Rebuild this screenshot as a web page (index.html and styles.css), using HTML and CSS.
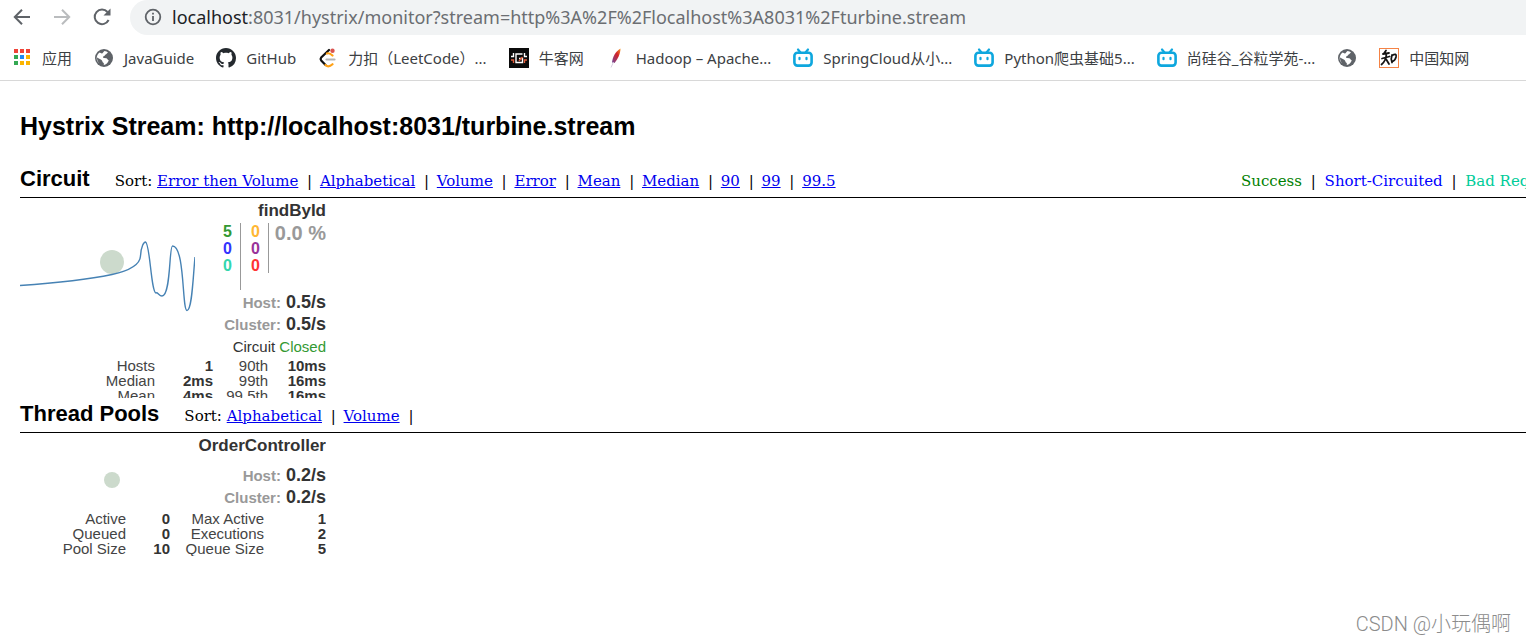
FILE: index.html
```html
<!DOCTYPE html>
<html lang="zh-CN">

<head>
    <meta charset="utf-8">
    <meta name="viewport" content="width=device-width, initial-scale=1.0">
    <title>Hystrix Monitor</title>

    <link rel="stylesheet" href="styles.css">

</head>

<body>

    <!-- shared icons -->
    <svg class="sprite" aria-hidden="true">
        <symbol id="globe" viewBox="0 0 20 20">
            <circle cx="10" cy="10" r="9" fill="#5f6368" />
            <path fill="#fff" d="M10.500 3 C12 3.200 13.200 3.800 14 4.600 C13 5 12.800 6 11.800 6.500 C10.800 6.800 10.800 8 9.600 8.300 C8.600 8.600 8.800 10 10 10 L12.400 10.200 C13.600 10.600 13.400 12 14.800 12.200 C14 14.800 12 16.600 9.800 17 L9.800 15 C8.200 14.600 8.600 12.600 7.200 11.800 L3 9.600 C3 12 3.800 14 5.200 15.300 C1.400 12 2.200 7 5.600 4.400 L7.800 5.400 C9 5.400 9.200 4 10.500 3 Z" />
        </symbol>
        <symbol id="bili" viewBox="0 0 20 20">
            <path d="M5 1.500 L7.500 4.500 M15 1.500 L12.500 4.500" stroke="#0ea7de" stroke-width="2.200" stroke-linecap="round" />
            <rect x="1.400" y="4.800" width="17.200" height="12.800" rx="3" fill="#fff" stroke="#0ea7de" stroke-width="2.600" />
            <path d="M6.500 9.800 V11.200 M13.500 9.800 V11.200" stroke="#0ea7de" stroke-width="2.200" stroke-linecap="round" />
        </symbol>
    </svg>

    <header class="browser">
        <nav class="toolbar">
            <button class="tool" aria-label="Back">
                <svg viewBox="0 0 20 20"><path d="M18 10 H3 M10 2.800 L2.800 10 L10 17.200" fill="none" stroke="#5f6368" stroke-width="2" /></svg>
            </button>
            <button class="tool" aria-label="Forward" disabled>
                <svg viewBox="0 0 20 20"><path d="M2 10 H17 M10 2.800 L17.200 10 L10 17.200" fill="none" stroke="#babcbe" stroke-width="2" /></svg>
            </button>
            <button class="tool" aria-label="Reload">
                <svg viewBox="0 0 20 20"><path d="M16.600 13 A7.300 7.300 0 1 1 15.500 5" fill="none" stroke="#5f6368" stroke-width="2" /><path d="M18.500 1.500 V8.500 H11.500 Z" fill="#5f6368" /></svg>
            </button>
            <div class="address">
                <svg class="info" viewBox="0 0 18 18"><circle cx="9" cy="9" r="7.300" fill="none" stroke="#5f6368" stroke-width="1.800" /><path d="M9 8 V13 M9 4.800 V6.600" stroke="#5f6368" stroke-width="1.800" /></svg>
                <label for="url">localhost</label>
                <input id="url" type="text" value=":8031/hystrix/monitor?stream=http%3A%2F%2Flocalhost%3A8031%2Fturbine.stream">
            </div>
        </nav>
        <nav class="bookmarks">
            <a href="#">
                <svg viewBox="0 0 20 20">
                    <path fill="#f04438" d="M2 1h4v4H2zM8 1h4v4H8zM14 1h4v4h-4z" />
                    <path fill="#34a853" d="M2 7h4v4H2zM2 13h4v4H2z" />
                    <path fill="#1e88f5" d="M8 7h4v4H8z" />
                    <path fill="#fbb400" d="M14 7h4v4h-4zM8 13h4v4H8zM14 13h4v4h-4z" />
                </svg>应用</a>
            <a href="#"><svg><use href="#globe" /></svg>JavaGuide</a>
            <a href="#">
                <svg viewBox="0 0 16 16"><path fill="#24292e" d="M8 0C3.580 0 0 3.580 0 8c0 3.540 2.290 6.530 5.470 7.590.4.070.55-.17.55-.38 0-.19-.01-.82-.01-1.490-2.010.37-2.530-.49-2.690-.94-.09-.23-.48-.94-.82-1.130-.28-.15-.68-.52-.01-.53.63-.01 1.080.58 1.230.82.72 1.210 1.870.87 2.330.66.07-.52.28-.87.51-1.070-1.780-.2-3.640-.89-3.640-3.950 0-.87.31-1.590.82-2.150-.08-.2-.36-1.020.08-2.120 0 0 .67-.21 2.200.82.64-.18 1.320-.27 2-.27s1.360.09 2 .27c1.530-1.040 2.200-.82 2.200-.82.44 1.100.16 1.920.08 2.120.51.56.82 1.270.82 2.150 0 3.070-1.870 3.750-3.650 3.950.29.25.54.73.54 1.480 0 1.070-.01 1.930-.01 2.200 0 .21.15.46.55.38A8.010 8.010 0 0 0 16 8c0-4.420-3.580-8-8-8z" /></svg>GitHub</a>
            <a href="#">
                <svg viewBox="0 0 20 20" fill="none" stroke-linecap="round" stroke-width="2.200">
                    <path d="M11 2 L3.200 9.500 Q2 11 3.200 12.500 L7.500 17" stroke="#111" />
                    <path d="M7.500 17 Q10.500 20 14.500 16.200 M9 5.500 Q11.500 4.500 14.500 7.500" stroke="#ffa116" />
                    <path d="M8.500 11.500 H16.500" stroke="#b3b3b3" />
                    <circle cx="14.500" cy="2.800" r="2.200" fill="#d9534f" />
                </svg>力扣（LeetCode）...</a>
            <a href="#">
                <svg viewBox="0 0 20 20" fill="none" stroke-width="1.400">
                    <rect width="20" height="20" fill="#0b0b0b" />
                    <path d="M13.500 6 H7 V14.500 H13.500 V10.500 H10 M4.500 5 V8.500 H2 M15.500 5 V8.500 H18" stroke="#fff" />
                    <path d="M2 12 H4.500 V15 M18 12 H15.500 V15 M10 13 L13.500 9" stroke="#e25c3b" />
                </svg>牛客网</a>
            <a href="#">
                <svg viewBox="0 0 20 20">
                    <defs><linearGradient id="feather" x1="1" y1="0" x2="0" y2="1"><stop offset="0" stop-color="#f69923" /><stop offset=".4" stop-color="#d22128" /><stop offset="1" stop-color="#6d4a9c" /></linearGradient></defs>
                    <path d="M14.500 0.500 C9.500 3.500 6.500 9 6 14.500 L8.500 15 C11.500 11.500 14.500 6 14.500 0.500 Z" fill="url(#feather)" />
                    <path d="M7.500 14 L5 19.500" stroke="#d8cfe0" />
                </svg>Hadoop – Apache...</a>
            <a href="#"><svg><use href="#bili" /></svg>SpringCloud从小...</a>
            <a href="#"><svg><use href="#bili" /></svg>Python爬虫基础5...</a>
            <a href="#"><svg><use href="#bili" /></svg>尚硅谷_谷粒学苑-...</a>
            <a href="#" aria-label="Bookmark"><svg><use href="#globe" /></svg></a>
            <a href="#">
                <svg viewBox="0 0 20 20" fill="none">
                    <rect x=".5" y=".5" width="19" height="19" fill="#fff" stroke="#f58345" />
                    <path d="M7 2.500 L4.500 6 M4 6 L10 5 M3 10.500 L10.500 8.500 M7.500 5.500 Q7 13 2.500 16.500 M7 11 L10 16 M13 7 Q11.500 11 13 14.500 M13 7.500 Q18 4.500 17 9 Q16 13 13 13.500" stroke="#151515" stroke-width="1.800" stroke-linecap="round" />
                </svg>中国知网</a>
        </nav>
    </header>

    <main>
        <h1>Hystrix Stream: http://localhost:8031/turbine.stream</h1>

        <section>
            <div class="menubar">
                <h2>Circuit</h2>
                <p class="sort">Sort:
                    <a href="#">Error then Volume</a> |
                    <a href="#">Alphabetical</a> |
                    <a href="#">Volume</a> |
                    <a href="#">Error</a> |
                    <a href="#">Mean</a> |
                    <a href="#">Median</a> |
                    <a href="#">90</a> |
                    <a href="#">99</a> |
                    <a href="#">99.5</a></p>
                <p class="legend"><span class="success">Success</span> | <span class="short">Short-Circuited</span> | <span class="bad">Bad Request</span></p>
            </div>
            <article class="monitor circuit">
                <div class="top">
                    <svg class="graph" viewBox="0 0 175 120">
                        <circle cx="92" cy="64" r="12" fill="#ccdacc" />
                        <path d="M0 87.500 C35 85 70 81 92 76.500 C108 73 120 67 120.500 58 C121 48 124 44 125.500 44 C130 45 131 94 136 95 C137.500 93.500 139 98 142 98 C151 98 149 48 152.500 48 C165 48 162 112.500 167 112.500 C172 112.500 173 80 175 59" fill="none" stroke="steelblue" stroke-width="1.400" />
                    </svg>
                    <div class="info-col">
                        <h3>findById</h3>
                        <div class="counters">
                            <ul class="first">
                                <li class="success">5</li>
                                <li class="short">0</li>
                                <li class="bad">0</li>
                            </ul>
                            <ul class="second">
                                <li class="timeout">0</li>
                                <li class="rejected">0</li>
                                <li class="failure">0</li>
                            </ul>
                            <p class="percent">0.0 %</p>
                        </div>
                        <p class="rate"><span>Host:</span> 0.5/s</p>
                        <p class="rate"><span>Cluster:</span> 0.5/s</p>
                        <p class="status">Circuit <span class="success">Closed</span></p>
                    </div>
                </div>
                <table>
                    <tr>
                        <th>Hosts</th>
                        <td>1</td>
                        <th>90th</th>
                        <td>10ms</td>
                    </tr>
                    <tr>
                        <th>Median</th>
                        <td>2ms</td>
                        <th>99th</th>
                        <td>16ms</td>
                    </tr>
                    <tr>
                        <th>Mean</th>
                        <td>4ms</td>
                        <th>99.5th</th>
                        <td>16ms</td>
                    </tr>
                </table>
            </article>
        </section>

        <section>
            <div class="menubar">
                <h2>Thread Pools</h2>
                <p class="sort">Sort:
                    <a href="#">Alphabetical</a> |
                    <a href="#">Volume</a> |</p>
            </div>
            <article class="monitor pool">
                <div class="top">
                    <svg class="graph" viewBox="0 0 175 70">
                        <circle cx="92" cy="47" r="8" fill="#ccdacc" />
                    </svg>
                    <div class="info-col">
                        <h3>OrderController</h3>
                        <p class="rate"><span>Host:</span> 0.2/s</p>
                        <p class="rate"><span>Cluster:</span> 0.2/s</p>
                    </div>
                </div>
                <table>
                    <tr>
                        <th>Active</th>
                        <td>0</td>
                        <th>Max Active</th>
                        <td>1</td>
                    </tr>
                    <tr>
                        <th>Queued</th>
                        <td>0</td>
                        <th>Executions</th>
                        <td>2</td>
                    </tr>
                    <tr>
                        <th>Pool Size</th>
                        <td>10</td>
                        <th>Queue Size</th>
                        <td>5</td>
                    </tr>
                </table>
            </article>
        </section>
    </main>

    <p class="watermark">CSDN @小玩偶啊</p>

</body>

</html>
```
FILE: styles.css
```css
body {
    margin: 0;
    min-height: 100vh;
    position: relative;
    overflow-x: hidden;
    background-color: white;
    font-family: "Liberation Sans", sans-serif;
}

h1,
h2,
h3,
p,
ul {
    margin: 0;
    padding: 0;
}

.sprite {
    display: none;
}

/* browser bars */
.browser {
    font-family: "Noto Sans", "Noto Sans CJK SC", sans-serif;
    border-bottom: 1px solid #d8d8d8;
}

.toolbar {
    display: flex;
    height: 35px;
    padding-left: 12px;
    gap: 20px;
}

.tool {
    width: 20px;
    height: 34px;
    padding: 0;
    border: none;
    background: none;
}

.tool svg {
    display: block;
    width: 20px;
    height: 20px;
}

.address {
    flex: 1;
    display: flex;
    align-items: center;
    margin-left: -2px;
    padding: 0 0 2px 14px;
    background-color: #f1f3f4;
    border-radius: 18px 0 0 18px;
    font-size: 18px;
    color: #202124;
}

.info {
    width: 18px;
    height: 18px;
    margin-right: 10px;
}

.address input {
    flex: 1;
    padding: 0;
    border: none;
    outline: none;
    background: none;
    font: inherit;
    color: #6b6e72;
}

.bookmarks {
    display: flex;
    align-items: center;
    gap: 22px;
    height: 45px;
    padding-left: 12px;
}

.bookmarks a {
    display: flex;
    align-items: center;
    gap: 10px;
    font-size: 15px;
    white-space: nowrap;
    color: #3c4043;
    text-decoration: none;
}

.bookmarks svg {
    width: 20px;
    height: 20px;
}

/* dashboard */
main {
    padding: 30px 0 0 20px;
}

h1 {
    font-size: 25px;
    line-height: 30px;
}

h2 {
    font-size: 22px;
    line-height: 32px;
}

h1 + section {
    margin-top: 22px;
}

.menubar {
    display: flex;
    align-items: baseline;
    gap: 25px;
    height: 34px;
    border-bottom: 1px solid black;
    font-family: "DejaVu Serif", serif;
    font-size: 15px;
    white-space: nowrap;
}

.menubar h2 {
    font-family: "Liberation Sans", sans-serif;
}

.menubar a {
    margin-right: 4px;
    color: #0000ee;
}

.menubar a + a {
    margin-left: 3px;
}

.legend {
    width: 285px;
    margin-left: auto;
    overflow: hidden;
}

.legend span {
    margin-right: 4px;
}

.legend span + span {
    margin-left: 4px;
}

.monitor {
    width: 306px;
    overflow: hidden;
    color: #333;
}

.circuit {
    height: 200px;
}

.top {
    display: flex;
    justify-content: space-between;
}

.graph {
    width: 175px;
    flex-shrink: 0;
    align-self: flex-start;
}

.info-col {
    flex: 1;
    text-align: right;
    white-space: nowrap;
}

h3 {
    font-size: 17px;
    line-height: 25px;
}

.counters {
    display: flex;
    justify-content: flex-end;
    align-items: flex-start;
    height: 68px;
    font-size: 16px;
    font-weight: bold;
}

.counters ul {
    list-style: none;
    line-height: 17px;
    padding-right: 8px;
    border-right: 1px solid #999;
}

.first {
    height: 67px;
}

.second {
    height: 50px;
    margin-left: 10px;
}

.percent {
    margin-left: 6px;
    font-size: 20px;
    line-height: 21px;
    color: #999;
}

.rate {
    font-size: 18px;
    font-weight: bold;
    line-height: 22px;
}

.rate span {
    font-size: 15px;
    line-height: 15px;
    color: #999;
}

.status {
    font-size: 15px;
    line-height: 23px;
}

.success {
    color: green;
}

.short {
    color: blue;
}

.bad {
    color: #00cc99;
}

.timeout {
    color: #ffb733;
}

.rejected {
    color: #993399;
}

.failure {
    color: #ff3333;
}

.monitor .success {
    color: #339933;
}

.monitor .short {
    color: #3333ff;
}

.monitor .bad {
    color: #33d6ad;
}

table {
    width: 306px;
    table-layout: fixed;
    border-collapse: collapse;
    font-size: 15px;
    line-height: 15px;
    text-align: right;
    white-space: nowrap;
}

th,
td {
    padding: 0;
}

th {
    font-weight: normal;
    text-align: right;
    color: #444;
}

td {
    font-weight: bold;
}

.circuit th:first-child {
    width: 135px;
}

.circuit td:nth-child(2) {
    width: 58px;
}

.circuit th:nth-child(3) {
    width: 55px;
}

.pool h3 {
    margin-bottom: 6px;
}

.pool table {
    margin-top: 3px;
}

.pool th:first-child {
    width: 106px;
}

.pool td:nth-child(2) {
    width: 44px;
}

.pool th:nth-child(3) {
    width: 94px;
}

.watermark {
    position: absolute;
    right: 15px;
    bottom: 6px;
    font-family: Roboto, "Noto Sans CJK SC", sans-serif;
    font-size: 20px;
    font-weight: 300;
    line-height: 26px;
    color: #8c8c8c;
}
```
